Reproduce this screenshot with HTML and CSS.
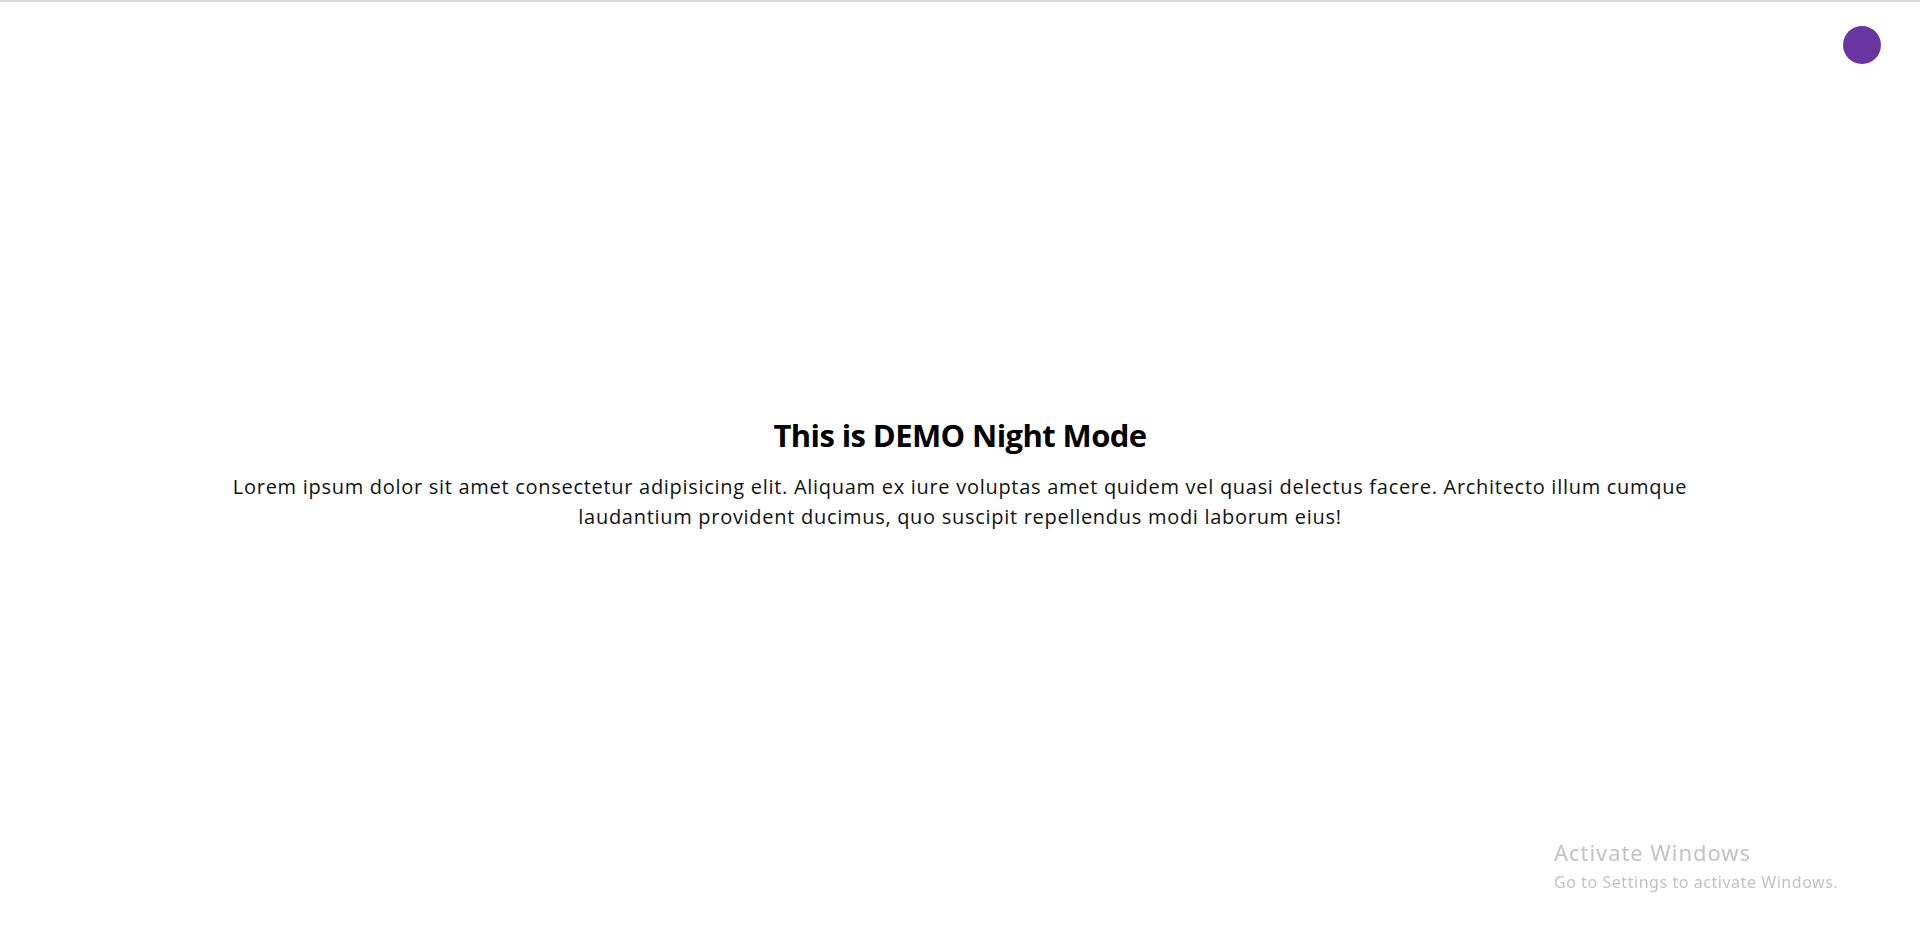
FILE: index.html
```html
<!DOCTYPE html>
<html lang="en">
<head>
<meta charset="utf-8">
<title>Night Mode Demo</title>
<link rel="stylesheet" href="styles.css">
</head>
<body>
<div class="page">
  <button class="toggle" aria-label="Toggle night mode"></button>
  <main class="content">
    <h1 class="title">This is DEMO Night Mode</h1>
    <p class="text">Lorem ipsum dolor sit amet consectetur adipisicing elit. Aliquam ex iure voluptas amet quidem vel quasi delectus facere. Architecto illum cumque laudantium provident ducimus, quo suscipit repellendus modi laborum eius!</p>
  </main>
  <div class="watermark">
    <div class="wm-title">Activate Windows</div>
    <div class="wm-sub">Go to Settings to activate Windows.</div>
  </div>
</div>
</body>
</html>
```
FILE: styles.css
```css
html, body {
  margin: 0;
  padding: 0;
  background: #fff;
}
body {
  border-top: 2px solid #d9d9d9;
  box-sizing: border-box;
}
.page {
  position: relative;
  min-height: calc(100vh - 2px);
  font-family: "Open Sans", "Noto Sans", sans-serif;
  color: #000;
}
.toggle {
  position: absolute;
  top: 24px;
  right: 39px;
  width: 38px;
  height: 38px;
  border: none;
  border-radius: 50%;
  background: #6935a0;
  padding: 0;
  cursor: pointer;
}
.content {
  box-sizing: border-box;
  min-height: calc(100vh - 2px);
  padding-top: 12px;
  display: flex;
  flex-direction: column;
  align-items: center;
  justify-content: center;
  text-align: center;
}
.title {
  margin: 0 0 17px;
  font-size: 31px;
  font-weight: 700;
  line-height: 40px;
  letter-spacing: -0.6px;
}
.text {
  margin: 0;
  max-width: 1480px;
  font-size: 20px;
  line-height: 30px;
  letter-spacing: 0.71px;
  color: #111;
}
.watermark {
  position: fixed;
  left: 1554px;
  top: 838px;
  color: #c2c2c2;
  font-family: "Noto Sans", "Open Sans", sans-serif;
}
.wm-title {
  font-size: 22px;
  line-height: 28px;
  letter-spacing: 0.95px;
}
.wm-sub {
  margin-top: 4px;
  font-size: 16px;
  line-height: 24px;
  letter-spacing: 0.55px;
}
```
